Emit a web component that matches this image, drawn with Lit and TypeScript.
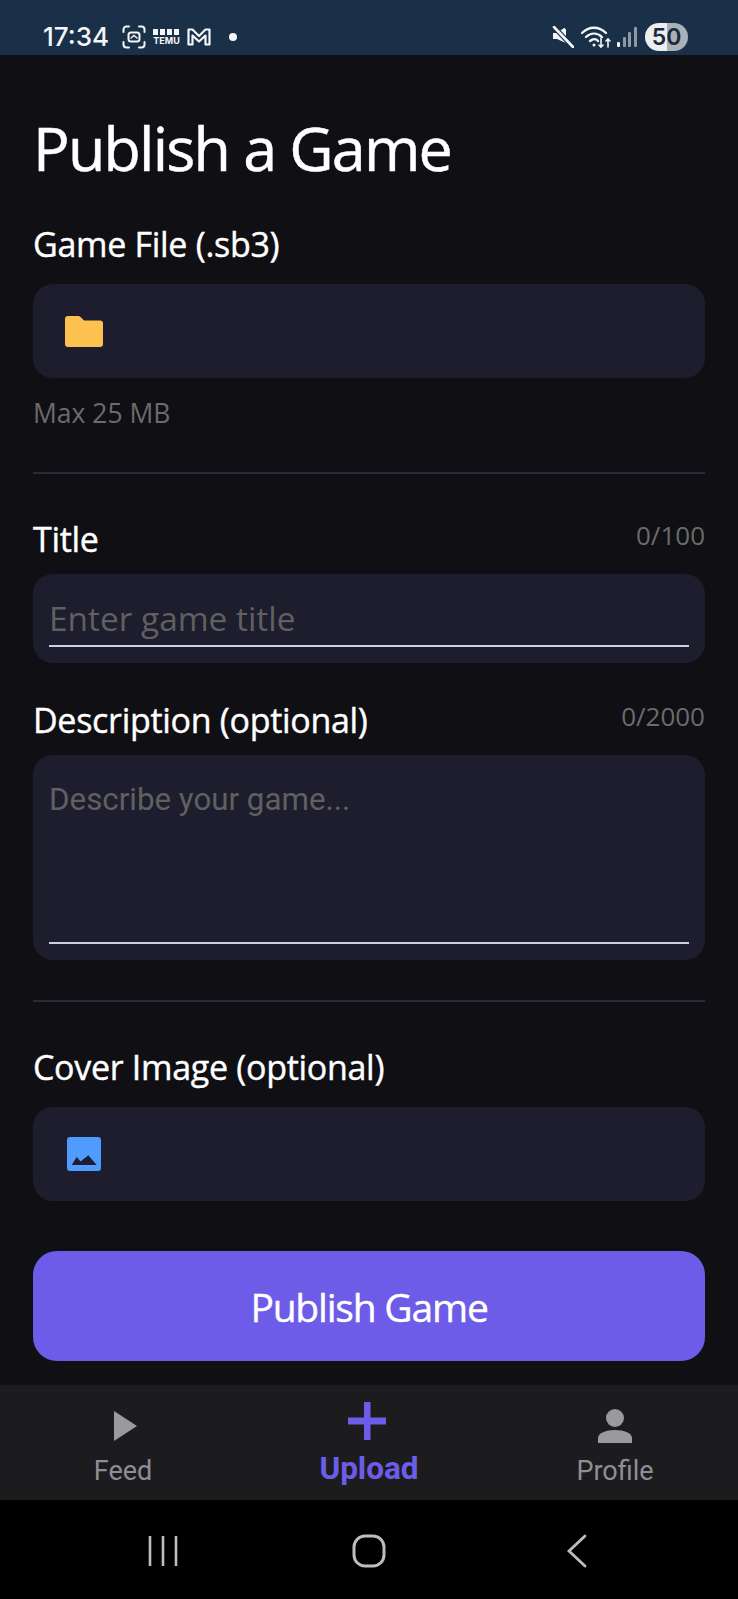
import { LitElement, html, css } from 'lit';
import { customElement } from 'lit/decorators.js';

@customElement('app-root')
export class AppRoot extends LitElement {
  static styles = css`
    :host {
      display: flex;
      flex-direction: column;
      width: 738px;
      height: 1599px;
      overflow: hidden;
      background: #0f0f14;
      color: #fff;
      font-family: "Open Sans", "Noto Sans", sans-serif;
    }

    /* status bar */
    .status {
      height: 55px;
      flex: none;
      background: #1a3049;
      display: flex;
      align-items: center;
      padding: 18px 50px 0 43px;
      box-sizing: border-box;
      color: #f4f6f8;
    }
    .time {
      font: 500 26px Inter, sans-serif;
      margin-right: 13px;
    }
    .temu {
      display: flex;
      flex-direction: column;
      align-items: center;
      font: 700 9px/9px Inter, sans-serif;
      margin: 0 7px 0 7px;
    }
    .temu i {
      display: block;
      width: 27px;
      height: 6px;
      margin-bottom: 1px;
      background: repeating-linear-gradient(90deg, #f4f6f8 0 5px, transparent 5px 7px);
    }
    .dot {
      width: 8px;
      height: 8px;
      border-radius: 50%;
      background: #f4f6f8;
      margin-left: 18px;
    }
    .spacer { flex: 1; }
    .battery {
      width: 43px;
      height: 28px;
      border-radius: 14px;
      margin-left: 8px;
      background: linear-gradient(90deg, #eceef0 0 50%, #a9b0b8 50% 100%);
      color: #1a2a3c;
      font: 600 23px/28px Inter, sans-serif;
      text-align: center;
    }

    /* form */
    main {
      flex: 1;
      padding: 0 33px;
      display: flex;
      flex-direction: column;
    }
    h1 {
      margin: 53px 0 0;
      font-size: 61px;
      line-height: 80px;
      font-weight: 400;
      letter-spacing: -1.8px;
      -webkit-text-stroke: 0.5px #fff;
    }
    .label-row {
      display: flex;
      justify-content: space-between;
      align-items: flex-start;
    }
    .label {
      font-size: 34px;
      line-height: 44px;
      font-weight: 400;
      letter-spacing: -0.3px;
      -webkit-text-stroke: 0.4px #fff;
    }
    .count {
      font: 26px/36px "Open Sans", sans-serif;
      color: #6b6b6b;
    }
    .box {
      background: #1d1d2e;
      border-radius: 20px;
      box-sizing: border-box;
    }
    .picker {
      height: 94px;
      display: flex;
      align-items: center;
      padding-left: 32px;
      margin-top: 18px;
    }
    .hint {
      font: 26.500px/36px "Open Sans", sans-serif;
      color: #6b6b6b;
      margin-top: 17px;
    }
    hr {
      border: 0;
      height: 2px;
      background: #2a2a38;
      margin: 0;
    }
    .field {
      margin-top: 13px;
      padding: 0 16px;
      display: flex;
      flex-direction: column;
    }
    .field input, .field textarea {
      display: block;
      width: 100%;
      box-sizing: border-box;
      background: none;
      border: 0;
      border-bottom: 2px solid #d0cede;
      outline: none;
      padding: 0;
      resize: none;
      color: #fff;
    }
    .field input {
      height: 73px;
      padding-top: 16px;
      font: 33.400px "Open Sans", sans-serif;
    }
    .field textarea {
      height: 189px;
      padding-top: 25px;
      font: 31.300px/40px Roboto, sans-serif;
    }
    ::placeholder {
      color: #606060;
      opacity: 1;
    }
    .publish {
      display: block;
      width: 100%;
      height: 110px;
      margin-top: 50px;
      border: 0;
      border-radius: 24px;
      background: #6c5ce7;
      color: #fff;
      font: 400 39px "Open Sans", sans-serif;
      letter-spacing: -1.2px;
      -webkit-text-stroke: 0.4px #fff;
    }

    /* bottom nav */
    nav {
      height: 115px;
      flex: none;
      background: #1c1c1e;
      display: grid;
      grid-template-columns: repeat(3, 1fr);
    }
    .tab {
      display: flex;
      flex-direction: column;
      align-items: center;
      font: 400 27px/32px Roboto, sans-serif;
      color: #8e8e93;
    }
    .tab svg { display: block; }
    .tab.active { color: #6c5ce7; font-weight: 700; font-size: 31.500px; }
    .feed-icon { margin: 26px 0 0 4px; }
    .feed-label { margin-top: 14px; }
    .upload-icon { margin: 17px 4px 0 0; }
    .upload-label { margin-top: 13px; }
    .profile-icon { margin-top: 24px; }
    .profile-label { margin-top: 12px; }

    /* android navigation */
    .sysbar {
      height: 99px;
      flex: none;
      background: #000;
      display: grid;
      grid-template-columns: repeat(3, 1fr);
      align-items: center;
      justify-items: center;
      padding: 2px 60px 0;
      box-sizing: border-box;
    }
  `;

  render() {
    return html`
      <div class="status">
        <span class="time">17:34</span>
        <svg width="24" height="24" viewBox="0 0 24 24" fill="none" stroke="#f4f6f8" stroke-width="2" stroke-linecap="round">
          <path d="M1.500 7V4.500a3 3 0 0 1 3-3H7M17 1.500h2.500a3 3 0 0 1 3 3V7M22.500 17v2.500a3 3 0 0 1-3 3H17M7 22.500H4.500a3 3 0 0 1-3-3V17" />
          <rect x="6.500" y="7.500" width="11" height="9" rx="2.500" />
          <path d="M9 13l3-2.500 3 2.500" stroke-width="1.500" />
        </svg>
        <span class="temu"><i></i>TEMU</span>
        <svg width="24" height="18" viewBox="0 0 24 18" fill="none" stroke="#f4f6f8" stroke-width="2.200" stroke-linejoin="round">
          <path d="M1.500 1.500h4L12 8l6.500-6.500h4v15h-4V7.500L12 13.500 5.500 7.500v9h-4z" />
        </svg>
        <span class="dot"></span>
        <span class="spacer"></span>
        <svg width="22" height="22" viewBox="0 0 22 22" fill="#f4f6f8">
          <path d="M1 7h4l7-5c1 0 2 1 2 2v13l-9-4H1z" />
          <path d="M2 1l19 20" stroke="#1a3049" stroke-width="5" />
          <path d="M2 1l19 20" stroke="#f4f6f8" stroke-width="2.600" stroke-linecap="round" />
        </svg>
        <svg style="margin-left:7px" width="32" height="24" viewBox="0 0 32 24" fill="none" stroke="#f4f6f8" stroke-width="2.300" stroke-linecap="round">
          <path d="M1 8c7-7 17-7 24 0M5 12c5-4.500 11-4.500 16 0M9 16c3-2.500 6-2.500 8 0" />
          <circle cx="13" cy="20" r="1.500" fill="#f4f6f8" stroke="none" />
          <path d="M20 13v9M18 20l2 2 2-2M27 22v-8M25 16l2-2 2 2" stroke-width="1.600" />
        </svg>
        <svg style="margin-left:4px" width="20" height="22" viewBox="0 0 20 22" fill="#8d99a7">
          <rect x="0" y="16" width="3" height="5" rx="1" fill="#f4f6f8" />
          <rect x="6" y="11" width="3" height="10" rx="1" />
          <rect x="11" y="6" width="3" height="15" rx="1" />
          <rect x="17" y="1" width="3" height="20" rx="1" />
        </svg>
        <span class="battery">50</span>
      </div>

      <main>
        <h1>Publish a Game</h1>
        <div class="label" style="margin-top:34px">Game File (.sb3)</div>
        <div class="box picker">
          <svg width="38" height="31" viewBox="0 0 38 31" fill="#fdc150">
            <path d="M3 0h10c1 0 2 .4 2.600 1L19 4.500h16a3 3 0 0 1 3 3V28a3 3 0 0 1-3 3H3a3 3 0 0 1-3-3V3a3 3 0 0 1 3-3z" />
          </svg>
        </div>
        <div class="hint">Max 25 MB</div>
        <hr style="margin-top:41px" />

        <div class="label-row" style="margin-top:43px">
          <span class="label">Title</span>
          <span class="count">0/100</span>
        </div>
        <div class="box field" style="height:89px">
          <input placeholder="Enter game title" />
        </div>

        <div class="label-row" style="margin-top:35px">
          <span class="label">Description (optional)</span>
          <span class="count">0/2000</span>
        </div>
        <div class="box field" style="height:205px">
          <textarea placeholder="Describe your game..."></textarea>
        </div>
        <hr style="margin-top:40px" />

        <div class="label" style="margin-top:43px">Cover Image (optional)</div>
        <div class="box picker" style="padding-left:34px">
          <svg width="34" height="34" viewBox="0 0 34 34">
            <rect width="34" height="34" rx="3" fill="#4f9bff" />
            <path d="M4.700 28l5-8 3.800 4.500 7.800-6.200 8.400 9.700z" fill="#1d1d2e" />
          </svg>
        </div>
        <button class="publish">Publish Game</button>
      </main>

      <nav>
        <div class="tab">
          <svg class="feed-icon" width="23" height="30" viewBox="0 0 23 30" fill="#9a9a9e"><path d="M0 0l23 15L0 30z" /></svg>
          <span class="feed-label">Feed</span>
        </div>
        <div class="tab active">
          <svg class="upload-icon" width="38" height="38" viewBox="0 0 38 38" fill="#6c5ce7">
            <path d="M16 0h6.500v15.500H38v7H22.500V38H16V22.500H0v-7h16z" />
          </svg>
          <span class="upload-label">Upload</span>
        </div>
        <div class="tab">
          <svg class="profile-icon" width="34" height="34" viewBox="0 0 34 34" fill="#9a9a9e">
            <circle cx="17" cy="9" r="9" />
            <path d="M0 34v-5c0-5 8-8 17-8s17 3 17 8v5z" />
          </svg>
          <span class="profile-label">Profile</span>
        </div>
      </nav>

      <div class="sysbar">
        <svg width="30" height="32" viewBox="0 0 30 32" stroke="#bdbdbd" stroke-width="2.600" fill="none">
          <path d="M2 1v30M15 1v30M28 1v30" />
        </svg>
        <svg width="34" height="34" viewBox="0 0 34 34" stroke="#bdbdbd" stroke-width="3" fill="none">
          <rect x="2" y="2" width="30" height="30" rx="11" />
        </svg>
        <svg style="margin-left:4px" width="22" height="34" viewBox="0 0 22 34" stroke="#bdbdbd" stroke-width="2.800" fill="none" stroke-linecap="round">
          <path d="M19 2L3 17l16 15" />
        </svg>
      </div>
    `;
  }
}
